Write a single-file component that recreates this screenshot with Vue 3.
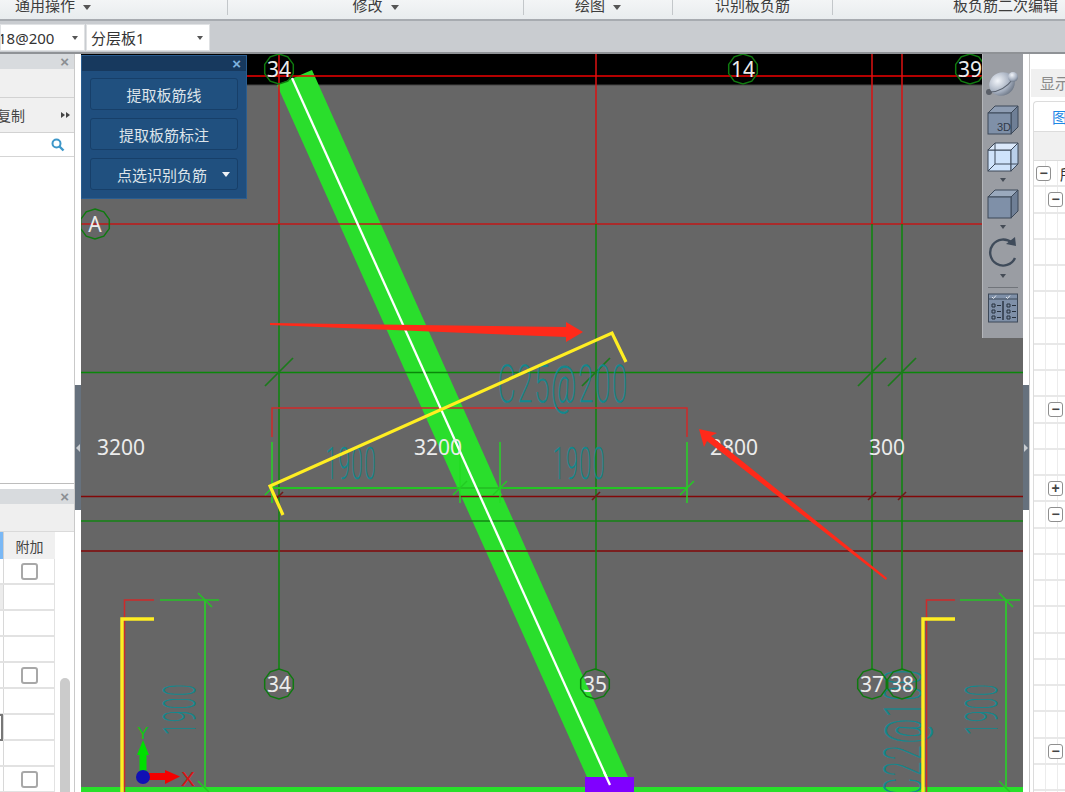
<script setup>
// 功能区分组
const ribbonGroups = [
  { name: '通用操作', arrow: true, cls: 'g-first' },
  { name: '修改', arrow: true, cls: 'g-modify' },
  { name: '绘图', arrow: true, cls: 'g-draw' },
  { name: '识别板负筋', arrow: false, cls: 'g-recog' },
  { name: '板负筋二次编辑', arrow: false, cls: 'g-last' }
]

const panelButtons = [
  { text: '提取板筋线' },
  { text: '提取板筋标注' },
  { text: '点选识别负筋', arrow: true }
]

// 左下属性表
const attrRows = [
  { check: true }, { gray: true }, {}, {}, { check: true }, {}, { partial: true }, {}, { check: true }
]

// 右侧树
const treeRows = Array.from({ length: 25 }, (_, i) => {
  if (i === 0) return { sign: '−', level: 0, text: '所' }
  if (i === 1 || i === 9 || i === 13 || i === 22) return { sign: '−', level: 1 }
  if (i === 12) return { sign: '+', level: 1 }
  if (i === 24) return { level: 1, text: '追' }
  return {}
})

// 轴号
const polygonPoints = (cx, cy, r) => {
  const pts = []
  for (let i = 0; i < 10; i++) {
    const a = (Math.PI * 2 * i) / 10 - Math.PI / 2
    pts.push((cx + r * Math.cos(a)).toFixed(1) + ',' + (cy + r * Math.sin(a)).toFixed(1))
  }
  return pts.join(' ')
}
const bubbles = [
  { x: 279, y: 69, t: '34' },
  { x: 743, y: 69, t: '14' },
  { x: 970, y: 69, t: '39' },
  { x: 95, y: 224, t: 'A' },
  { x: 279, y: 684, t: '34' },
  { x: 595, y: 684, t: '35' },
  { x: 872, y: 684, t: '37' },
  { x: 902, y: 684, t: '38' }
]

const axisX = [279, 596, 872, 902]
const dimLabels = [
  { x: 121, t: '3200' },
  { x: 438, t: '3200' },
  { x: 734, t: '2800' },
  { x: 887, t: '300' }
]
const dimTicks = [
  { x: 272, top: 442 },
  { x: 460, top: 455 },
  { x: 500, top: 442 },
  { x: 687, top: 442 }
]

// 钢筋标注文字，瘦高字形靠缩放得到
const rebarLabels = [
  { t: 'C25@200', size: 52, tf: 'translate(498,402) scale(0.52,1)' },
  { t: '1900', size: 44, tf: 'translate(326,479) scale(0.456,1)' },
  { t: '1900', size: 44, tf: 'translate(553,479) scale(0.474,1)' },
  { t: '1900', size: 44, tf: 'translate(195,735) rotate(-90) scale(0.465,1)' },
  { t: '1900', size: 44, tf: 'translate(997,735) rotate(-90) scale(0.465,1)' },
  { t: 'C22@100', size: 52, tf: 'translate(921,795) rotate(-90) scale(0.504,1)' }
]
</script>

<template>
  <div class="app">
    <div class="ribbon">
      <div v-for="g in ribbonGroups" :key="g.name" class="ribbon-group" :class="g.cls">
        <span>{{ g.name }}</span>
        <i v-if="g.arrow" class="ribbon-arrow"></i>
      </div>
    </div>

    <div class="toolbar">
      <div class="combo combo-a"><span>18@200</span><i class="combo-arrow"></i></div>
      <div class="combo combo-b"><span>分层板1</span><i class="combo-arrow"></i></div>
    </div>

    <div class="main">
      <aside class="left">
        <div class="left-top">
          <div class="dock-head"><span class="dock-close">×</span></div>
          <div class="tool-row tall"></div>
          <div class="tool-row copy-row">
            <span class="copy-text">复制</span>
            <span class="more">
              <i></i><i></i>
            </span>
          </div>
          <div class="search-row">
            <svg width="14" height="14" viewBox="0 0 14 14">
              <circle cx="5.5" cy="5.5" r="4" fill="none" stroke="#3d97c9" stroke-width="2" />
              <path d="M8.5 8.5 L12.5 12.5" stroke="#3d97c9" stroke-width="2.4" />
            </svg>
          </div>
          <div class="list-body"></div>
        </div>

        <div class="left-bottom">
          <div class="dock-head"><span class="dock-close">×</span></div>
          <div class="attr-tools"></div>
          <div class="attr-table">
            <div class="attr-head">
              <div class="cell-blue"></div>
              <div class="cell-main">附加</div>
            </div>
            <div v-for="(r, i) in attrRows" :key="i" class="attr-row">
              <div class="cell-side" :class="{ gray: r.gray }">
                <span v-if="r.partial" class="partial"></span>
              </div>
              <div class="cell-main"><span v-if="r.check" class="check"></span></div>
            </div>
          </div>
          <div class="scroll-thumb"></div>
        </div>
      </aside>

      <div class="splitter"><div class="handle"><i class="tri-left"></i></div></div>

      <div class="canvas">
        <svg class="drawing" width="942" height="738" viewBox="81 54 942 738">
          <rect x="81" y="54" width="942" height="31" fill="#000" />
          <line x1="81" y1="85" x2="1023" y2="85" stroke="#444" stroke-width="1" />

          <polygon points="277,85 312,70 628,777 587,777" fill="#2ade2c" />

          <line x1="81" y1="76" x2="1023" y2="76" stroke="#f00000" stroke-width="1.4" />
          <line x1="81" y1="224" x2="1023" y2="224" stroke="#c01818" stroke-width="1.3" />
          <line x1="81" y1="372.5" x2="1023" y2="372.5" stroke="#0a870a" stroke-width="1.5" />
          <line x1="81" y1="496.5" x2="1023" y2="496.5" stroke="#820808" stroke-width="1.5" />
          <line x1="81" y1="521" x2="1023" y2="521" stroke="#148414" stroke-width="1.3" />
          <line x1="81" y1="551" x2="1023" y2="551" stroke="#820808" stroke-width="1.5" />

          <g v-for="x in axisX" :key="x">
            <line :x1="x" y1="54" :x2="x" y2="224" stroke="#dc1212" stroke-width="1.5" />
            <line :x1="x" y1="224" :x2="x" y2="670" stroke="#0c870c" stroke-width="1.5" />
            <line :x1="x - 14" y1="386" :x2="x + 14" y2="358" stroke="#1b7a1b" stroke-width="1.7" />
            <line :x1="x - 4" y1="500" :x2="x + 4" y2="492" stroke="#6e1a1a" stroke-width="1.6" />
          </g>

          <!-- 板筋标注 -->
          <polyline points="272,437 272,408 687,408 687,437" fill="none" stroke="#cf2a2a" stroke-width="1.5" />
          <line x1="272" y1="488" x2="687" y2="488" stroke="#24c424" stroke-width="2" />
          <g v-for="t in dimTicks" :key="t.x">
            <line :x1="t.x" :y1="t.top" :x2="t.x" y2="503" stroke="#22dd22" stroke-width="1.4" />
            <line :x1="t.x - 7" y1="495" :x2="t.x + 7" y2="481" stroke="#22cc22" stroke-width="1.4" />
          </g>

          <line x1="292" y1="78" x2="610" y2="785" stroke="#fff" stroke-width="2.3" />
          <rect x="585" y="777" width="49" height="15" fill="#8000ff" />
          <line x1="604" y1="772" x2="610" y2="785" stroke="#fff" stroke-width="2.3" />
          <rect x="81" y="787" width="504" height="5" fill="#28e02a" />
          <rect x="634" y="787" width="389" height="5" fill="#28e02a" />

          <text
            v-for="(r, i) in rebarLabels"
            :key="i"
            class="teal"
            :font-size="r.size"
            :transform="r.tf"
          >{{ r.t }}</text>

          <polyline points="283,515 270,486 612,333 626,362" fill="none" stroke="#ffee22" stroke-width="3.2" />

          <!-- 左侧 -->
          <polyline points="124.5,792 124.5,600 154,600" fill="none" stroke="#cf2a2a" stroke-width="1.5" />
          <polyline points="154,619 122,619 122,792" fill="none" stroke="#ffee22" stroke-width="3.4" />
          <line x1="160" y1="600" x2="219" y2="600" stroke="#24c424" stroke-width="1.3" />
          <line x1="205" y1="600" x2="205" y2="788" stroke="#22dd22" stroke-width="1.5" />
          <line x1="198" y1="593" x2="212" y2="607" stroke="#24c424" stroke-width="1.5" />
          <line x1="198" y1="781" x2="209" y2="792" stroke="#24c424" stroke-width="1.5" />

          <!-- 右侧 -->
          <polyline points="926.5,792 926.5,600 955,600" fill="none" stroke="#cf2a2a" stroke-width="1.5" />
          <polyline points="955,619 923,619 923,792" fill="none" stroke="#ffee22" stroke-width="3.4" />
          <line x1="960" y1="600" x2="1020" y2="600" stroke="#24c424" stroke-width="1.3" />
          <line x1="1006" y1="600" x2="1006" y2="788" stroke="#22dd22" stroke-width="1.5" />
          <line x1="999" y1="593" x2="1013" y2="607" stroke="#24c424" stroke-width="1.5" />
          <line x1="999" y1="781" x2="1010" y2="792" stroke="#24c424" stroke-width="1.5" />

          <text v-for="d in dimLabels" :key="d.x" class="dim" :x="d.x" y="455">{{ d.t }}</text>

          <g v-for="b in bubbles" :key="b.x + '-' + b.y">
            <polygon :points="polygonPoints(b.x, b.y, 15)" fill="none" stroke="#0f7a0f" stroke-width="1.5" />
            <text class="dim" :x="b.x" :y="b.y + 8">{{ b.t }}</text>
          </g>

          <!-- 红色箭头 -->
          <polygon points="270,323 566,327 566,322 583,332 566,342 566,337 270,325" fill="#ff2a1a" />
          <polygon points="699,429 717,433 711,436 887,578 886,580 707,441 704,447" fill="#ff2a1a" />

          <!-- 坐标系 -->
          <rect x="139.5" y="752" width="7" height="22" fill="#00e000" />
          <polygon points="143,740 149,755 137,755" fill="#00e000" />
          <rect x="148" y="773" width="18" height="7" fill="#f40000" />
          <polygon points="180,776.5 165,770 165,784" fill="#f40000" />
          <circle cx="143" cy="777" r="7" fill="#1010b4" />
          <text class="axis-y" x="143" y="739">Y</text>
          <text class="axis-x" x="188" y="786">X</text>
        </svg>

        <div class="float-panel">
          <div class="float-head"><span>×</span></div>
          <div class="float-body">
            <div v-for="b in panelButtons" :key="b.text" class="float-btn" :class="{ 'has-arrow': b.arrow }">
              <span>{{ b.text }}</span>
              <i v-if="b.arrow"></i>
            </div>
          </div>
        </div>

        <div class="view-bar">
          <svg class="vicon" width="36" height="30" viewBox="0 0 36 30">
            <defs>
              <radialGradient id="ball" cx="0.4" cy="0.3" r="0.8">
                <stop offset="0" stop-color="#f2f5fa" />
                <stop offset="0.6" stop-color="#a5afbf" />
                <stop offset="1" stop-color="#5c6675" />
              </radialGradient>
            </defs>
            <circle cx="4" cy="24" r="3" fill="#5a5f68" />
            <ellipse cx="17" cy="16" rx="13" ry="11.5" fill="url(#ball)" transform="rotate(-25 17 16)" />
            <path d="M5 24 Q18 24 28 11" fill="none" stroke="#59616e" stroke-width="1.2" />
            <circle cx="28" cy="9" r="5" fill="url(#ball)" />
          </svg>
          <svg class="vicon" width="32" height="30" viewBox="0 0 32 30">
            <polygon points="8,1 31,1 24,8 1,8" fill="#8e9db3" stroke="#3c4858" />
            <polygon points="24,8 31,1 31,22 24,29" fill="#6f7f96" stroke="#3c4858" />
            <rect x="1" y="8" width="23" height="21" fill="#7f90a8" stroke="#3c4858" />
            <text class="label-3d" x="10" y="26">3D</text>
          </svg>
          <svg class="vicon mt" width="32" height="30" viewBox="0 0 32 30">
            <rect x="1" y="8" width="23" height="21" fill="#cfe3fb" stroke="#3c4858" />
            <polygon points="8,1 31,1 24,8 1,8" fill="#dbe9fb" stroke="#3c4858" />
            <polygon points="24,8 31,1 31,22 24,29" fill="#b9cfe9" stroke="#3c4858" />
            <path d="M8 1 V22 H31 M8 22 L1 29" fill="none" stroke="#3c4858" />
          </svg>
          <i class="view-arrow"></i>
          <svg class="vicon" width="32" height="30" viewBox="0 0 32 30">
            <polygon points="8,1 31,1 24,8 1,8" fill="#9aa9bd" stroke="#3c4858" />
            <polygon points="24,8 31,1 31,22 24,29" fill="#6f7f96" stroke="#3c4858" />
            <rect x="1" y="8" width="23" height="21" fill="#7f90a8" stroke="#3c4858" />
          </svg>
          <i class="view-arrow"></i>
          <svg class="vicon" width="32" height="32" viewBox="0 0 32 32">
            <path d="M25 7 A13 13 0 1 0 28 22" fill="none" stroke="#3f4b5a" stroke-width="2.4" />
            <polygon points="19,8 29,10 28,1" fill="#3f4b5a" />
          </svg>
          <i class="view-arrow"></i>
          <div class="view-sep"></div>
          <svg class="vicon" width="30" height="30" viewBox="0 0 30 30">
            <rect x="0.5" y="1" width="29" height="28" fill="#7f90a8" stroke="#3c4858" />
            <line x1="1" y1="6" x2="29" y2="6" stroke="#3c4858" />
            <line x1="15" y1="8" x2="15" y2="27" stroke="#26303c" stroke-width="1.4" />
            <path d="M4 11 h3 v3 h-3z M4 17 h3 v3 h-3z M4 23 h3 v3 h-3z M19 11 h3 v3 h-3z M19 17 h3 v3 h-3z M19 23 h3 v3 h-3z" fill="none" stroke="#26303c" />
            <path d="M9 12.5 h4 M9 18.5 h4 M9 24.5 h4 M24 12.5 h4 M24 18.5 h4 M24 24.5 h4" stroke="#26303c" />
            <path d="M4 4 l1.5 1.5 l2.5 -3 M18 4 l1.5 1.5 l2.5 -3" fill="none" stroke="#e4e8ee" />
          </svg>
        </div>
      </div>

      <div class="splitter right-split"><div class="handle"><i class="tri-right"></i></div></div>

      <aside class="right">
        <div class="right-title">显示</div>
        <div class="tabs">
          <div class="tab">图</div>
        </div>
        <div class="tree">
          <div class="tree-head"></div>
          <div v-for="(r, i) in treeRows" :key="i" class="tree-row">
            <div class="tree-col"><span v-if="r.sign && r.level === 0" class="sign">{{ r.sign }}</span></div>
            <div class="tree-col"><span v-if="r.sign && r.level === 1" class="sign">{{ r.sign }}</span></div>
            <div class="tree-text" :class="{ dim: r.text === '追', top: r.text === '所' }">{{ r.text }}</div>
          </div>
        </div>
      </aside>
    </div>
  </div>
</template>

<style>
html, body {
  margin: 0;
  padding: 0;
  overflow: hidden;
  background: #fff;
}
</style>

<style scoped>
* {
  box-sizing: border-box;
}
.app {
  width: 1065px;
  height: 792px;
  overflow: hidden;
  display: flex;
  flex-direction: column;
  font-family: "Noto Sans", "Noto Sans CJK SC", sans-serif;
  color: #333;
}

.ribbon {
  height: 21px;
  flex: none;
  display: flex;
  background: linear-gradient(#f3f5f6, #e8ecee);
  border-bottom: 2px solid #a7abb0;
}
.ribbon-group {
  height: 15px;
  display: flex;
  align-items: flex-end;
  justify-content: center;
  gap: 8px;
  font-size: 15px;
  line-height: 20px;
  color: #3d3d3d;
  border-right: 1px solid #c3c7ca;
}
.g-first { width: 228px; justify-content: flex-start; padding-left: 15px; }
.g-modify { width: 296px; }
.g-draw { width: 149px; }
.g-recog { width: 160px; }
.g-last { flex: 1; justify-content: flex-end; padding-right: 7px; border-right: none; }
.ribbon-arrow {
  width: 0;
  height: 0;
  margin-bottom: 5px;
  border-left: 4px solid transparent;
  border-right: 4px solid transparent;
  border-top: 5px solid #555;
}

.toolbar {
  height: 33px;
  flex: none;
  display: flex;
  gap: 1px;
  padding-top: 3px;
  background: #c9ccd0;
  border-bottom: 2px solid #8f9296;
}
.combo {
  height: 27px;
  display: flex;
  align-items: center;
  justify-content: space-between;
  background: #fff;
  border: 1px solid #e0e2e4;
  font-size: 15px;
  color: #333;
  overflow: hidden;
}
.combo-a { width: 85px; padding: 0 6px 0 0; }
.combo-a span { margin-left: -3px; }
.combo-b { width: 124px; padding: 0 6px 0 4px; }
.combo-arrow {
  border-left: 3.5px solid transparent;
  border-right: 3.5px solid transparent;
  border-top: 4px solid #555;
}

.main {
  height: 738px;
  display: flex;
}

.left {
  width: 75px;
  flex: none;
  display: flex;
  flex-direction: column;
  background: #fff;
  border-right: 1px solid #c9c9c9;
}
.left-top {
  height: 430px;
  flex: none;
  display: flex;
  flex-direction: column;
  border-bottom: 1px solid #bdbdbd;
}
.dock-head {
  height: 15px;
  flex: none;
  display: flex;
  align-items: center;
  justify-content: flex-end;
  padding-right: 5px;
  background: #d8dbde;
}
.dock-close {
  font-family: "Liberation Sans", sans-serif;
  font-size: 15px;
  font-weight: 700;
  line-height: 14px;
  color: #8b8f93;
}
.tool-row {
  background: #f0f0f0;
  border-bottom: 1px solid #d2d2d2;
}
.tall {
  height: 29px;
}
.copy-row {
  height: 35px;
  display: flex;
  align-items: center;
  justify-content: space-between;
  padding-right: 4px;
  overflow: hidden;
}
.copy-text {
  font-size: 14px;
  margin-left: -3px;
  color: #444;
}
.more {
  display: flex;
}
.more i {
  border-top: 3.5px solid transparent;
  border-bottom: 3.5px solid transparent;
  border-left: 4px solid #444;
  margin-left: 1px;
}
.search-row {
  height: 24px;
  display: flex;
  align-items: center;
  justify-content: flex-end;
  padding-right: 9px;
  border-bottom: 1px solid #d5d5d5;
}
.list-body {
  flex: 1;
}

.left-bottom {
  position: relative;
  flex: 1;
  margin-top: 5px;
  overflow: hidden;
}
.attr-tools {
  height: 28px;
  background: #efefef;
  border-bottom: 1px solid #dadada;
}
.attr-head {
  width: 55px;
  height: 27px;
  display: flex;
  background: #f0f0f0;
  font-size: 14px;
}
.cell-blue {
  width: 4px;
  background: #7ab8f5;
  border-right: 1px solid #d0d0d0;
}
.attr-head .cell-main {
  border: none;
  color: #444;
}
.attr-row {
  width: 55px;
  height: 26px;
  display: flex;
  border-bottom: 2px solid #e2e2e2;
}
.cell-side {
  width: 4px;
  position: relative;
  border-right: 1px solid #d8d8d8;
}
.cell-side.gray {
  background: #ececec;
}
.partial {
  position: absolute;
  left: -2px;
  top: -1px;
  width: 5px;
  height: 27px;
  border: 2px solid #777;
}
.cell-main {
  flex: 1;
  display: flex;
  align-items: center;
  justify-content: center;
  border-right: 1px solid #e2e2e2;
}
.check {
  width: 17px;
  height: 17px;
  background: #fff;
  border: 2px solid #a8a8a8;
  border-radius: 3px;
}
.scroll-thumb {
  position: absolute;
  left: 60px;
  top: 189px;
  width: 10px;
  height: 200px;
  background: #cbcbcb;
  border-radius: 5px;
}

.splitter {
  width: 6px;
  flex: none;
  position: relative;
  background: #fff;
}
.handle {
  position: absolute;
  left: 0;
  top: 331px;
  width: 100%;
  height: 125px;
  display: flex;
  align-items: center;
  justify-content: center;
  background: #66717d;
}
.tri-left {
  border-top: 4px solid transparent;
  border-bottom: 4px solid transparent;
  border-right: 4px solid #c8ccd0;
}
.tri-right {
  border-top: 4px solid transparent;
  border-bottom: 4px solid transparent;
  border-left: 4px solid #c8ccd0;
}

.canvas {
  position: relative;
  width: 942px;
  height: 738px;
  flex: none;
  background: #666;
  overflow: hidden;
}
.drawing {
  display: block;
}
.teal {
  font-family: "Roboto", sans-serif;
  font-weight: 100;
  letter-spacing: 4px;
  fill: #10898f;
  stroke: #10898f;
  stroke-width: 0.7;
}
.dim {
  font-family: "Noto Sans", sans-serif;
  font-size: 21px;
  fill: #ececec;
  text-anchor: middle;
}
.axis-y {
  font-family: "Liberation Sans", sans-serif;
  font-size: 17px;
  fill: #10c810;
  text-anchor: middle;
}
.axis-x {
  font-family: "Liberation Sans", sans-serif;
  font-size: 21px;
  fill: #d81414;
  text-anchor: middle;
}

.float-panel {
  position: absolute;
  left: 0;
  top: 1px;
  width: 166px;
  height: 144px;
  background: #1f4e7e;
  border: 1px solid #2a5d90;
}
.float-head {
  height: 15px;
  display: flex;
  align-items: center;
  justify-content: flex-end;
  padding-right: 5px;
  background: #17395e;
  font-family: "Liberation Sans", sans-serif;
  font-size: 15px;
  font-weight: 700;
  color: #7fb2de;
}
.float-body {
  display: flex;
  flex-direction: column;
  gap: 8px;
  padding: 7px 8px 0;
}
.float-btn {
  height: 32px;
  display: flex;
  align-items: center;
  justify-content: center;
  background: #20507f;
  border: 1px solid #173f69;
  border-radius: 3px;
  font-size: 15px;
  color: #dde4ea;
}
.has-arrow {
  position: relative;
  padding-right: 4px;
}
.has-arrow i {
  position: absolute;
  right: 7px;
  top: 13px;
  border-left: 4.5px solid transparent;
  border-right: 4.5px solid transparent;
  border-top: 5px solid #eef2f6;
}

.view-bar {
  position: absolute;
  right: 0;
  top: 0;
  width: 41px;
  height: 284px;
  display: flex;
  flex-direction: column;
  align-items: center;
  padding-top: 14px;
  background: #9a9da3;
  border-left: 1px solid #b4b6ba;
}
.vicon {
  flex: none;
  display: block;
}
.vicon + .vicon {
  margin-top: 7px;
}
.view-arrow {
  flex: none;
  margin: 6px 0 7px;
  border-left: 3.5px solid transparent;
  border-right: 3.5px solid transparent;
  border-top: 4px solid #454c56;
}
.label-3d {
  font-family: "Liberation Sans", sans-serif;
  font-size: 11px;
  fill: #2f3a48;
}
.view-sep {
  width: 30px;
  height: 1px;
  margin: 2px 0 5px;
  background: #70747a;
}

.right {
  flex: 1;
  padding-left: 1px;
  padding-top: 15px;
  border-left: 1px solid #c9c9c9;
  overflow: hidden;
  background: #fff;
}
.right-title {
  height: 28px;
  padding-left: 9px;
  background: #f0f0f0;
  font-size: 15px;
  line-height: 28px;
  color: #8a8a8a;
  white-space: nowrap;
}
.tabs {
  height: 34px;
  padding: 4px 0 0 2px;
}
.tab {
  height: 31px;
  padding-left: 18px;
  border: 1px solid #dcdcdc;
  border-right: none;
  border-radius: 4px 0 0 0;
  font-size: 15px;
  line-height: 30px;
  color: #1e88e5;
}
.tree {
  margin-left: 2px;
  border-left: 1px solid #dcdcdc;
  border-top: 1px solid #dcdcdc;
}
.tree-head {
  height: 29px;
  background: #f0f0f0;
  border-bottom: 1px solid #dcdcdc;
}
.tree-row {
  height: 26.25px;
  display: flex;
  border-bottom: 2px solid #e8e8e8;
}
.tree-col {
  width: 12px;
  flex: none;
  position: relative;
  border-right: 1px solid #ececec;
}
.sign {
  position: absolute;
  z-index: 1;
  left: 2px;
  top: 5px;
  width: 15px;
  height: 15px;
  background: #fff;
  border: 1.5px solid #8f8f8f;
  border-radius: 3px;
  font-family: "Liberation Sans", sans-serif;
  font-size: 14px;
  font-weight: 700;
  line-height: 12px;
  text-align: center;
  color: #444;
}
.tree-text {
  font-size: 15px;
  line-height: 26px;
  padding-left: 2px;
  white-space: nowrap;
}
.tree-text.top {
  color: #333;
}
.tree-text.dim {
  color: #aaa;
}
</style>
